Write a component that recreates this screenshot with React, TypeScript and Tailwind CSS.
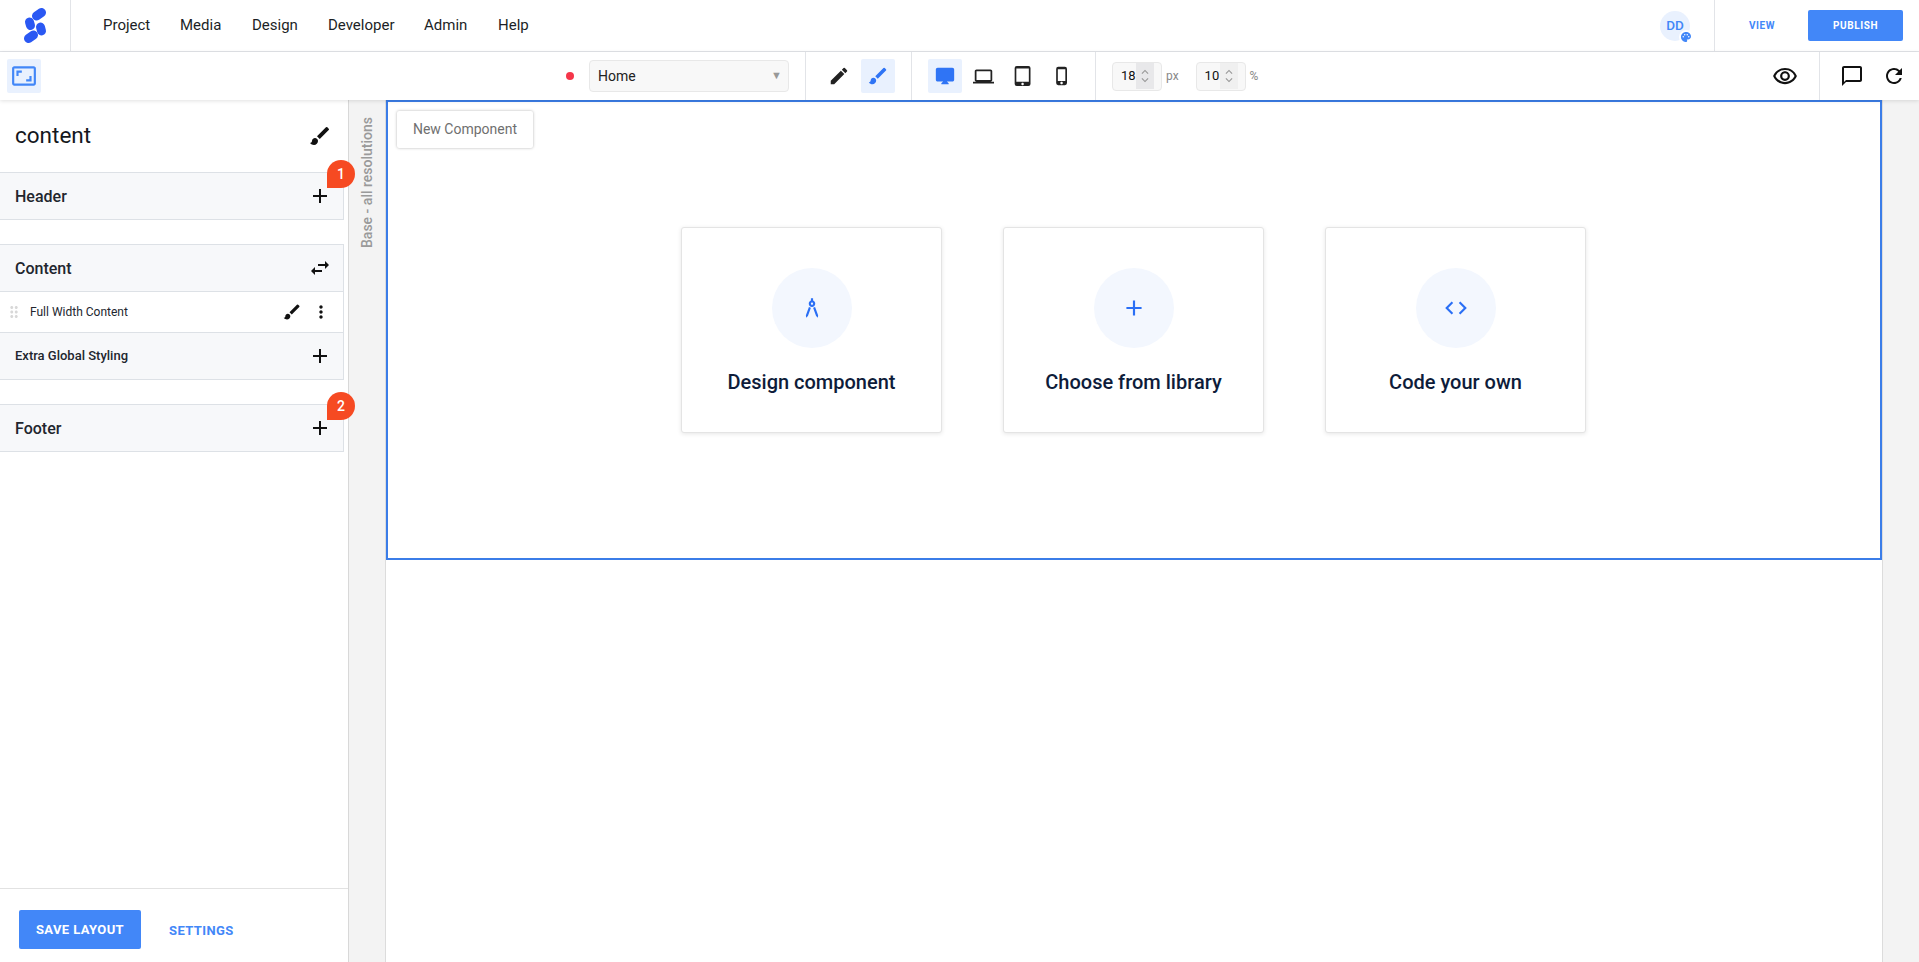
import { MdAdd, MdArchitecture, MdBrush, MdChatBubbleOutline, MdCode, MdDesktopMac, MdDragIndicator, MdEdit, MdKeyboardArrowDown, MdKeyboardArrowUp, MdLaptop, MdMoreVert, MdOutlineRemoveRedEye, MdPalette, MdPhoneIphone, MdRefresh, MdSwapHoriz, MdTabletMac, MdAspectRatio } from 'react-icons/md'

const nav = [
  { label: 'Project', w: 'w-[77px]' },
  { label: 'Media', w: 'w-[72px]' },
  { label: 'Design', w: 'w-[76px]' },
  { label: 'Developer', w: 'w-[96px]' },
  { label: 'Admin', w: 'w-[74px]' },
  { label: 'Help', w: 'w-[40px]' },
]

const cards = [
  { label: 'Design component', Icon: MdArchitecture },
  { label: 'Choose from library', Icon: MdAdd },
  { label: 'Code your own', Icon: MdCode },
]

function Logo() {
  return (
    <svg viewBox="22 7 24 37" className="h-[37px] w-[24px]" stroke="#2a58f3" strokeLinecap="round" fill="none">
      <line x1="35.500" y1="16" x2="40.500" y2="12.500" strokeWidth="9" />
      <line x1="28.500" y1="22" x2="29.500" y2="25.500" strokeWidth="9" />
      <line x1="39.500" y1="27" x2="40.500" y2="31" strokeWidth="9" />
      <line x1="27.500" y1="38.500" x2="32.500" y2="35" strokeWidth="9" />
    </svg>
  )
}

function Badge({ n }: { n: number }) {
  return (
    <span className="absolute left-[327px] top-[-12px] flex h-[28px] w-[28px] items-center justify-center rounded-full rounded-bl-none bg-[#f64a22] text-[14px] font-medium text-white">
      {n}
    </span>
  )
}

function PanelRow({ label, size, children }: { label: string; size: string; children: React.ReactNode }) {
  return (
    <div className="flex h-[48px] w-[344px] items-center justify-between border border-l-0 border-[#dde1e6] bg-[#f7f8fa] pl-[15px] pr-[11px]">
      <span className={`${size} font-medium text-[#22262e]`}>{label}</span>
      {children}
    </div>
  )
}

function NumberBox({ value, unit, shade }: { value: string; unit: string; shade: string }) {
  return (
    <div className="flex items-center">
      <div className="flex h-[29px] w-[50px] items-center justify-between rounded-[4px] border border-[#e8e8e8] bg-[#f8f8f8] pl-[8px] pr-[7px] text-[13px] text-[#111]">
        {value}
        <span className={`flex h-[26px] w-[18px] flex-col items-center justify-center leading-none text-[#999] ${shade}`}>
          <MdKeyboardArrowUp className="-mb-[3px] text-[14px]" />
          <MdKeyboardArrowDown className="-mt-[3px] text-[14px]" />
        </span>
      </div>
      <span className="ml-[4px] text-[12px] text-[#888]">{unit}</span>
    </div>
  )
}

export default function App() {
  return (
    <div className="flex h-screen flex-col overflow-hidden bg-white font-['Roboto',sans-serif] text-[#22262e]">
      <header className="flex h-[52px] shrink-0 items-center border-b border-[#e2e4e8]">
        <div className="flex h-full w-[71px] items-center justify-center border-r border-[#e2e4e8] pr-[1px]">
          <Logo />
        </div>
        <nav className="ml-[32px] flex text-[15px] text-[#1c1f26]">
          {nav.map((n) => (
            <span key={n.label} className={n.w}>{n.label}</span>
          ))}
        </nav>
        <div className="ml-auto flex h-full items-center">
          <div className="relative mr-[24px] flex h-[30px] w-[30px] items-center justify-center rounded-full bg-[#e9f1fe] text-[13.500px] font-medium text-[#4287f8]">
            DD
            <span className="absolute bottom-[-3px] right-[-3px] flex h-[14px] w-[14px] items-center justify-center rounded-full bg-white">
              <MdPalette className="text-[12px] text-[#4287f8]" />
            </span>
          </div>
          <div className="flex h-full w-[94px] items-center justify-center border-l border-[#e2e4e8] pl-[1px] text-[10px] font-bold tracking-[0.5px] text-[#4287f8]">
            VIEW
          </div>
          <button className="mr-[16px] h-[31px] w-[95px] rounded-[2px] bg-[#4287f8] text-[10px] font-bold tracking-[0.6px] text-white">
            PUBLISH
          </button>
        </div>
      </header>

      <div className="relative z-10 flex h-[48px] shrink-0 items-center shadow-[0_1px_4px_rgba(0,0,0,0.12)]">
        <div className="flex h-full w-[805px] items-center pl-[7px]">
          <div className="flex h-[34px] w-[34px] items-center justify-center rounded-[2px] bg-[#e9f1fe]">
            <MdAspectRatio className="text-[26px] text-[#4287f8]" />
          </div>
          <span className="ml-[525px] h-[8px] w-[8px] rounded-full bg-[#f5364a]" />
          <div className="ml-[15px] flex h-[32px] w-[200px] items-center justify-between rounded-[4px] border border-[#e8e8e8] bg-[#f8f8f8] pl-[8px] pr-[6px] text-[14px] text-[#222]">
            Home
            <span className="text-[11px] text-[#999]">▼</span>
          </div>
        </div>
        <div className="flex h-full w-[106px] items-center border-l border-[#e2e4e8] pl-[22px]">
          <MdEdit className="text-[22px] text-[#222]" />
          <div className="ml-[11px] flex h-[34px] w-[34px] items-center justify-center rounded-[2px] bg-[#e9f1fe]">
            <MdBrush className="text-[22px] text-[#2f74f5]" />
          </div>
        </div>
        <div className="flex h-full w-[184px] items-center border-l border-[#e2e4e8] pl-[16px]">
          <div className="flex h-[34px] w-[34px] items-center justify-center rounded-[2px] bg-[#e9f1fe]">
            <MdDesktopMac className="text-[22px] text-[#2f74f5]" />
          </div>
          <div className="ml-[2px] flex w-[39px] justify-center">
            <MdLaptop className="text-[21px] text-[#222]" />
          </div>
          <div className="flex w-[39px] justify-center">
            <MdTabletMac className="text-[20px] text-[#222]" />
          </div>
          <div className="flex w-[39px] justify-center">
            <MdPhoneIphone className="text-[20px] text-[#222]" />
          </div>
        </div>
        <div className="flex h-full w-[179px] items-center gap-[17px] border-l border-[#e2e4e8] pl-[16px]">
          <NumberBox value="18" unit="px" shade="bg-[#e8e8ea]" />
          <NumberBox value="10" unit="%" shade="bg-[#f0f0f0]" />
        </div>
        <div className="flex h-full flex-1 items-center justify-end pr-[21px]">
          <MdOutlineRemoveRedEye className="text-[26px] text-[#111]" />
        </div>
        <div className="flex h-full w-[100px] items-center border-l border-[#e2e4e8] pl-[20px]">
          <MdChatBubbleOutline className="text-[24px] text-[#111]" />
          <MdRefresh className="ml-[18px] text-[24px] text-[#111]" />
        </div>
      </div>

      <div className="flex min-h-0 flex-1">
        <aside className="flex w-[349px] shrink-0 flex-col border-r border-[#d8d8d8]">
          <div className="flex h-[72px] shrink-0 items-center justify-between pl-[15px] pr-[16px]">
            <span className="text-[22.500px] text-[#14171d]">content</span>
            <MdBrush className="text-[24px] text-[#111]" />
          </div>
          <div className="relative">
            <PanelRow label="Header" size="pt-[1px] text-[16px]">
              <MdAdd className="text-[24px] text-[#111]" />
            </PanelRow>
            <Badge n={1} />
          </div>
          <div className="mt-[24px]">
            <PanelRow label="Content" size="pt-[1px] text-[16px]">
              <MdSwapHoriz className="text-[24px] text-[#111]" />
            </PanelRow>
            <div className="flex h-[40px] w-[344px] items-center border-r border-[#dde1e6] pl-[5px] pr-[12px]">
              <MdDragIndicator className="text-[18px] text-[#d8d8d8]" />
              <span className="ml-[7px] text-[12px] text-[#22262e]">Full Width Content</span>
              <MdBrush className="ml-auto text-[20px] text-[#111]" />
              <MdMoreVert className="ml-[9px] text-[20px] text-[#111]" />
            </div>
            <PanelRow label="Extra Global Styling" size="text-[13px]">
              <MdAdd className="text-[24px] text-[#111]" />
            </PanelRow>
          </div>
          <div className="relative mt-[24px]">
            <PanelRow label="Footer" size="pt-[1px] text-[16px]">
              <MdAdd className="text-[24px] text-[#111]" />
            </PanelRow>
            <Badge n={2} />
          </div>
          <div className="mt-auto flex h-[74px] shrink-0 items-start border-t border-[#e2e2e2] pl-[19px] pt-[21px]">
            <button className="h-[39px] w-[122px] rounded-[2px] bg-[#4287f8] text-[13px] font-bold tracking-[0.4px] text-white">
              SAVE LAYOUT
            </button>
            <span className="ml-[28px] mt-[11px] text-[13px] font-bold tracking-[0.4px] text-[#4287f8]">SETTINGS</span>
          </div>
        </aside>

        <div className="flex w-[36px] shrink-0 justify-center bg-[#f3f3f3] pt-[17px]">
          <span className="h-fit rotate-180 text-[14px] font-medium text-[#9a9a9a] [writing-mode:vertical-rl]">
            Base - all resolutions
          </span>
        </div>

        <main className="w-[1498px] shrink-0 border-x border-[#dcdcdc] bg-white">
          <div className="h-[460px] border-2 border-[#3b7de8] p-[9px]">
            <button className="h-[37px] w-[136px] rounded-[2px] bg-white text-[14px] text-[#6f6f6f] shadow-[0_0_3px_rgba(0,0,0,0.3)]">
              New Component
            </button>
            <div className="mt-[79px] flex justify-center gap-[61px] pr-[1px]">
              {cards.map(({ label, Icon }) => (
                <div key={label} className="flex h-[206px] w-[261px] flex-col items-center rounded-[3px] border border-[#e4e4e4] bg-white pt-[40px] shadow-[0_1px_4px_rgba(0,0,0,0.1)]">
                  <div className="flex h-[80px] w-[80px] items-center justify-center rounded-full bg-[#f3f7fe]">
                    <Icon className="text-[26px] text-[#2a6ff5]" />
                  </div>
                  <span className="mt-[19px] text-[20px] font-medium text-[#0e1c3a]">{label}</span>
                </div>
              ))}
            </div>
          </div>
        </main>

        <div className="flex-1 bg-[#f3f3f3]" />
      </div>
    </div>
  )
}
